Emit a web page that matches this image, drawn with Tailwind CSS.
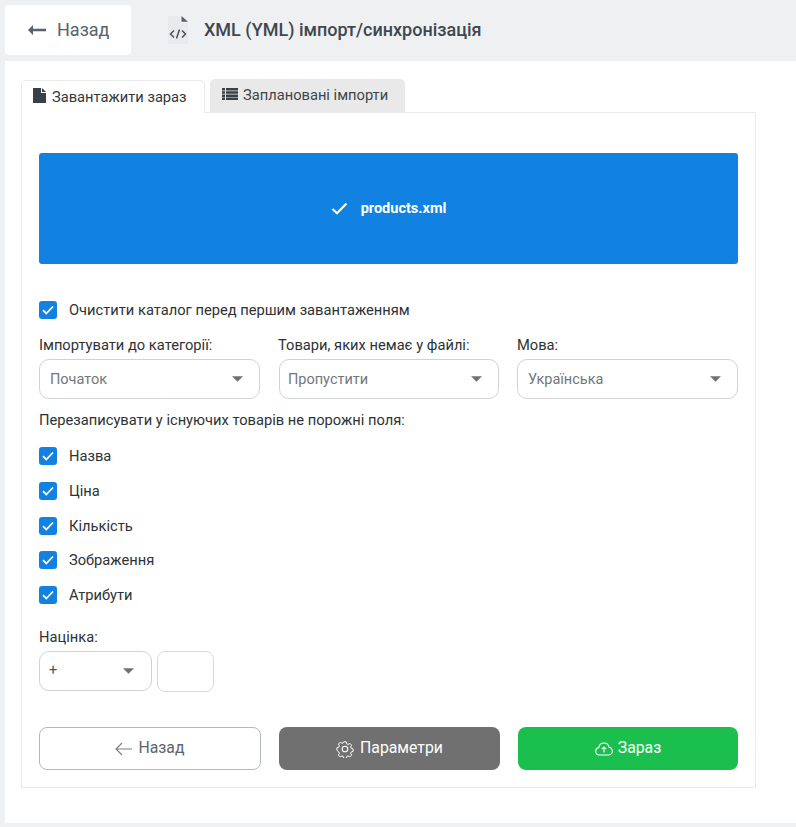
<!DOCTYPE html>
<html lang="uk">
<head>
  <meta charset="UTF-8" />
  <title>XML (YML) імпорт/синхронізація</title>
  <script src="https://cdn.jsdelivr.net/npm/@tailwindcss/browser@4"></script>
</head>
<body class="bg-[#eef0f2] font-['Roboto',sans-serif] text-[14px] text-[#2d3237] overflow-hidden">
  <div class="w-[796px] h-[827px] flex flex-col">
    <!-- top bar -->
    <header class="h-[61px] pt-[5px] pl-[5px] flex items-start">
      <a class="w-[126px] h-[50px] bg-white rounded-[3px] flex items-center pl-[23px] text-[18px] font-[450] text-[#56626c]">
        <svg width="18" height="10" viewBox="0 0 18 10" class="mr-[11px]"><path d="M5 0 0 5l5 5V6.300h13V3.700H5z" fill="#56626c"/></svg>
        <span class="-mt-[1px]">Назад</span>
      </a>
      <div class="h-[50px] ml-[37px] flex items-center">
        <svg width="20" height="28" viewBox="0 0 20 28" class="mr-[16px]">
          <path d="M0 0h12v7h8v21H0z" fill="#e9eaeb"/><path d="M13.500 0 20 5.800h-6.500z" fill="#5a5f65"/>
          <path d="M6 14.500 2.500 18 6 21.500M14 14.500 17.500 18 14 21.500M11.500 13.500 8.500 22.500" fill="none" stroke="#4b5258" stroke-width="1.500"/>
        </svg>
        <h1 class="text-[18px] font-medium text-[#3f474e] -mt-[1px]">XML (YML) імпорт/синхронізація</h1>
      </div>
    </header>

    <main class="w-[791px] h-[762px] ml-[5px] bg-white pt-[18px] pl-[16px]">
      <!-- tabs -->
      <div class="flex items-end h-[34px] relative z-10">
        <div class="w-[184px] h-[33px] bg-white border border-b-0 border-[#e8eaec] rounded-t-[5px] flex items-center pl-[11px] text-[#33383d]">
          <svg width="14" height="15" viewBox="0 0 14 15" class="mr-[5px] -mt-[3px]"><path d="M0 0h8v5h5v10H0zM9 0l4 4H9z" fill="#3a4047"/></svg>
          <span class="text-[14.700px]">Завантажити зараз</span>
        </div>
        <div class="w-[195px] h-[33px] ml-[5px] mb-[1px] bg-[#e9e9e9] rounded-t-[5px] flex items-center pl-[12px] text-[#3f454b]">
          <svg width="16" height="12" viewBox="0 0 16 12" class="mr-[5px] -mt-[3px]" fill="#3a4047"><path d="M0 0h3v2.500H0zM4 0h12v2.500H4zM0 3.200h3v2.500H0zM4 3.200h12v2.500H4zM0 6.400h3v2.500H0zM4 6.400h12v2.500H4zM0 9.500h3V12H0zM4 9.500h12V12H4z"/></svg>
          <span class="text-[14.700px]">Заплановані імпорти</span>
        </div>
      </div>

      <div class="w-[735px] h-[676px] -mt-[1px] border border-[#e8eaec] px-[17px] pt-[40px]">
        <!-- uploaded file -->
        <div class="h-[111px] bg-[#1282e2] rounded-[3px] flex items-center justify-center text-white font-bold text-[14.500px]">
          <svg width="17" height="13" viewBox="0 0 17 13" class="mr-[13px]"><path d="M1.500 7 6 11.300 15.500 1.500" fill="none" stroke="white" stroke-width="2.200"/></svg>
          products.xml
        </div>

        <label class="flex items-center h-[18px] mt-[37px] text-[14.700px] font-[450]">
          <span class="w-[18px] h-[18px] bg-[#1282e2] rounded-[3px] flex items-center justify-center mr-[12px]">
            <svg width="12" height="10" viewBox="0 0 12 10"><path d="M1 5.200 4.300 8.500 11 1.500" fill="none" stroke="white" stroke-width="1.800"/></svg>
          </span>
          Очистити каталог перед першим завантаженням
        </label>

        <!-- selects -->
        <div class="grid grid-cols-[240px_238px_221px] mt-[16px]">
          <div>
            <div class="h-[20px] text-[14.700px] font-[450] leading-[20px]">Імпортувати до категорії:</div>
            <div class="w-[221px] h-[40px] mt-[4px] border border-[#cfd2d6] rounded-[10px] flex items-center justify-between pl-[10px] pr-[16px] text-[14.500px] text-[#72777c]">
              <span class="pt-[1px]">Початок</span>
              <svg width="11" height="6" viewBox="0 0 12 6"><path d="M0 0h12L6 6z" fill="#6f7275"/></svg>
            </div>
          </div>
          <div>
            <div class="h-[20px] text-[14.700px] font-[450] leading-[20px] -ml-[1px]">Товари, яких немає у файлі:</div>
            <div class="w-[220px] h-[40px] mt-[4px] border border-[#cfd2d6] rounded-[10px] flex items-center justify-between pl-[8px] pr-[16px] text-[14.500px] text-[#72777c]">
              <span class="pt-[1px]">Пропустити</span>
              <svg width="11" height="6" viewBox="0 0 12 6"><path d="M0 0h12L6 6z" fill="#6f7275"/></svg>
            </div>
          </div>
          <div>
            <div class="h-[20px] text-[14.700px] font-[450] leading-[20px]">Мова:</div>
            <div class="w-[221px] h-[40px] mt-[4px] border border-[#cfd2d6] rounded-[10px] flex items-center justify-between pl-[10px] pr-[16px] text-[14.500px] text-[#72777c]">
              <span class="pt-[1px]">Українська</span>
              <svg width="11" height="6" viewBox="0 0 12 6"><path d="M0 0h12L6 6z" fill="#6f7275"/></svg>
            </div>
          </div>
        </div>

        <div class="mt-[11px] h-[20px] leading-[20px] text-[14.700px] font-[450]">Перезаписувати у існуючих товарів не порожні поля:</div>

        <!-- field checkboxes -->
        <div class="mt-[17px] flex flex-col gap-[16.800px] text-[14.700px] font-[450]">
          <label class="flex items-center h-[18px]"><span class="w-[18px] h-[18px] bg-[#1282e2] rounded-[3px] flex items-center justify-center mr-[12px]"><svg width="12" height="10" viewBox="0 0 12 10"><path d="M1 5.200 4.300 8.500 11 1.500" fill="none" stroke="white" stroke-width="1.800"/></svg></span>Назва</label>
          <label class="flex items-center h-[18px]"><span class="w-[18px] h-[18px] bg-[#1282e2] rounded-[3px] flex items-center justify-center mr-[12px]"><svg width="12" height="10" viewBox="0 0 12 10"><path d="M1 5.200 4.300 8.500 11 1.500" fill="none" stroke="white" stroke-width="1.800"/></svg></span>Ціна</label>
          <label class="flex items-center h-[18px]"><span class="w-[18px] h-[18px] bg-[#1282e2] rounded-[3px] flex items-center justify-center mr-[12px]"><svg width="12" height="10" viewBox="0 0 12 10"><path d="M1 5.200 4.300 8.500 11 1.500" fill="none" stroke="white" stroke-width="1.800"/></svg></span>Кількість</label>
          <label class="flex items-center h-[18px]"><span class="w-[18px] h-[18px] bg-[#1282e2] rounded-[3px] flex items-center justify-center mr-[12px]"><svg width="12" height="10" viewBox="0 0 12 10"><path d="M1 5.200 4.300 8.500 11 1.500" fill="none" stroke="white" stroke-width="1.800"/></svg></span>Зображення</label>
          <label class="flex items-center h-[18px]"><span class="w-[18px] h-[18px] bg-[#1282e2] rounded-[3px] flex items-center justify-center mr-[12px]"><svg width="12" height="10" viewBox="0 0 12 10"><path d="M1 5.200 4.300 8.500 11 1.500" fill="none" stroke="white" stroke-width="1.800"/></svg></span>Атрибути</label>
        </div>

        <!-- markup -->
        <div class="mt-[23px] h-[20px] leading-[20px] text-[14.700px] font-[450]">Націнка:</div>
        <div class="flex gap-[5px] mt-[4px]">
          <div class="w-[113px] h-[40px] border border-[#cfd2d6] rounded-[10px] flex items-center justify-between pl-[9px] pr-[17px] text-[14.500px] text-[#4d5359]">
            +
            <svg width="11" height="6" viewBox="0 0 12 6"><path d="M0 0h12L6 6z" fill="#6f7275"/></svg>
          </div>
          <div class="w-[57px] h-[41px] border border-[#d8dadd] rounded-[8px]"></div>
        </div>

        <!-- actions -->
        <div class="grid grid-cols-[222px_221px_220px] gap-x-[18px] mt-[35px]">
          <button class="h-[43px] border border-[#b2b8c2] rounded-[8px] bg-white flex items-center justify-center text-[15.800px] text-[#60666c]">
            <svg width="18" height="14" viewBox="0 0 18 14" class="mr-[5px]"><path d="M7 1 1 7l6 6M1 7h16" fill="none" stroke="#7b8086" stroke-width="1.200"/></svg>
            <span class="-mt-[1px]">Назад</span>
          </button>
          <button class="h-[43px] rounded-[8px] bg-[#707070] flex items-center justify-center text-[15.800px] font-[450] text-white">
            <svg width="18" height="18" viewBox="0 0 18 18" class="mr-[6px]" fill="none" stroke="white" stroke-width="1.100"><circle cx="9" cy="9" r="2.800"/><path d="M7.600 1h2.800l.5 2.300 1.500.7 2-1.200 2 2-1.200 2 .7 1.500 2.100.6v2.800l-2.100.6-.7 1.500 1.200 2-2 2-2-1.200-1.500.7-.5 2.100H7.600l-.5-2.100-1.500-.7-2 1.200-2-2 1.200-2-.7-1.500L0 10.400V7.600l2.100-.6.700-1.500-1.200-2 2-2 2 1.200 1.500-.7z" transform="translate(.9 .9) scale(.9)"/></svg>
            <span class="-mt-[1px]">Параметри</span>
          </button>
          <button class="h-[43px] rounded-[8px] bg-[#1bbf4d] flex items-center justify-center text-[15.800px] font-[450] text-white">
            <svg width="18" height="14" viewBox="0 0 18 14" class="mr-[5px]" fill="none" stroke="white" stroke-width="1.100"><path d="M4.500 13C2.300 13 .7 11.400.7 9.300c0-1.900 1.300-3.400 3.100-3.700C4.300 2.900 6.400 1 9 1c2.500 0 4.600 1.800 5.100 4.300 1.800.3 3.200 1.900 3.200 3.900 0 2.100-1.700 3.800-3.800 3.800z"/><path d="M9 10.500V5M6.700 7.200 9 5l2.300 2.200"/></svg>
            <span class="-mt-[1px]">Зараз</span>
          </button>
        </div>
      </div>
    </main>
  </div>
</body>
</html>
